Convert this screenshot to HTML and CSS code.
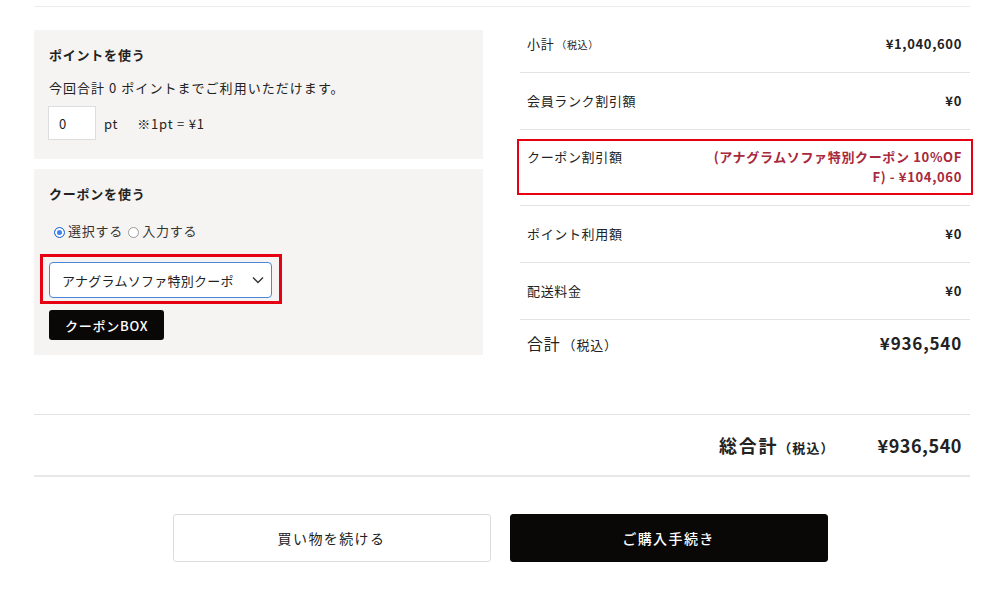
FILE: index.html
```html
<!DOCTYPE html>
<html lang="ja">
<head>
    <meta charset="UTF-8">
    <meta name="viewport" content="width=device-width, initial-scale=1.0">
    <title>カート</title>
    <link rel="stylesheet" href="styles.css">
</head>
<body>
    <div class="cart">
        <div class="summary">
            <div class="options">
                <div class="panel panel-point">
                    <h3>ポイントを使う</h3>
                    <p class="note">今回合計 0 ポイントまでご利用いただけます。</p>
                    <div class="point-row">
                        <input type="text" class="point-input" value="0">
                        <span class="unit">pt</span>
                        <span class="rate">※1pt = ¥1</span>
                    </div>
                </div>
                <div class="panel panel-coupon">
                    <h3>クーポンを使う</h3>
                    <div class="radios">
                        <label><input type="radio" name="coupon_mode" checked>選択する</label>
                        <label><input type="radio" name="coupon_mode">入力する</label>
                    </div>
                    <div class="mark mark-select">
                        <div class="select-wrap">
                            <select class="coupon-select">
                                <option>アナグラムソファ特別クーポン 10%OFF</option>
                            </select>
                            <svg class="chevron" width="12" height="8" viewBox="0 0 12 8"><path d="M1 1.5l5 5 5-5" fill="none" stroke="#333" stroke-width="1.4"/></svg>
                        </div>
                    </div>
                    <button class="btn-box">クーポンBOX</button>
                </div>
            </div>

            <div class="totals">
                <div class="row">
                    <span class="label">小計<small>（税込）</small></span>
                    <span class="value">¥1,040,600</span>
                </div>
                <div class="row">
                    <span class="label">会員ランク割引額</span>
                    <span class="value">¥0</span>
                </div>
                <div class="row row-coupon">
                    <div class="mark mark-row">
                        <span class="label">クーポン割引額</span>
                        <span class="value discount">(アナグラムソファ特別クーポン 10%OFF) - ¥104,060</span>
                    </div>
                </div>
                <div class="row">
                    <span class="label">ポイント利用額</span>
                    <span class="value">¥0</span>
                </div>
                <div class="row">
                    <span class="label">配送料金</span>
                    <span class="value">¥0</span>
                </div>
                <div class="row row-total">
                    <span class="label">合計<small>（税込）</small></span>
                    <span class="value">¥936,540</span>
                </div>
            </div>
        </div>

        <div class="grand">
            <span class="grand-label">総合計<small>（税込）</small></span>
            <span class="grand-value">¥936,540</span>
        </div>

        <div class="actions">
            <button class="btn btn-continue">買い物を続ける</button>
            <button class="btn btn-checkout">ご購入手続き</button>
        </div>
    </div>
</body>
</html>
```

FILE: styles.css
```css
body {
    margin: 0;
    background-color: #ffffff;
    font-family: 'Noto Sans CJK JP', 'Noto Sans', sans-serif;
    font-size: 13px;
    color: #222222;
}
.cart {
    width: 936px;
    margin-left: 34px;
    padding-top: 6px;
}
.summary {
    display: grid;
    grid-template-columns: 449px 450px;
    column-gap: 37px;
    align-items: start;
    border-top: 1px solid #ececec;
    padding-bottom: 46px;
}

/* left side */
.options {
    padding-top: 23px;
    display: flex;
    flex-direction: column;
    gap: 10px;
}
.panel {
    background-color: #f5f4f2;
    padding: 15px 15px 19px;
}
.panel-coupon {
    padding-bottom: 15px;
}
.panel h3 {
    margin: 0;
    font-size: 13px;
    line-height: 20px;
    font-weight: bold;
    letter-spacing: 0.06em;
}
.note {
    margin: 13px 0 0;
    line-height: 20px;
    letter-spacing: 0.08em;
}
.point-row {
    display: flex;
    align-items: center;
    margin-top: 8px;
    letter-spacing: 0.06em;
}
.point-input {
    width: 48px;
    height: 34px;
    box-sizing: border-box;
    border: 1px solid #dddddd;
    padding: 0 10px;
    font-family: inherit;
    font-size: 13px;
    color: #222222;
    margin: 0 0 0 -1px;
}
.unit {
    margin-left: 8px;
}
.rate {
    margin-left: 19px;
}
.radios {
    display: flex;
    gap: 5px;
    margin-top: 17px;
    margin-left: 5px;
    line-height: 20px;
    letter-spacing: 0.06em;
    color: #333333;
}
.radios label {
    display: flex;
    align-items: center;
}
.radios input {
    appearance: none;
    width: 11px;
    height: 11px;
    margin: 3px 3px 0 0;
    border: 1px solid #9a9a9a;
    border-radius: 50%;
    background-color: #ffffff;
}
.radios input:checked {
    border-color: #2f6fd6;
    background-color: #3c84e8;
    box-shadow: inset 0 0 0 2px #ffffff;
}
.mark {
    border: 3px solid #e60012;
}
.mark-select {
    margin: 13px 0 0 -9px;
    width: 242px;
    box-sizing: border-box;
    padding: 5px 7px 3px 6px;
}
.select-wrap {
    position: relative;
}
.coupon-select {
    appearance: none;
    display: block;
    width: 223px;
    height: 36px;
    border: 1px solid #4a86d8;
    border-radius: 4px;
    background-color: #ffffff;
    padding: 0 38px 0 12px;
    font-family: inherit;
    font-size: 13px;
    letter-spacing: 0.02em;
    color: #222222;
}
.chevron {
    position: absolute;
    right: 8px;
    top: 14px;
}
.btn-box {
    margin-top: 6px;
    height: 30px;
    padding: 0 16px;
    background-color: #0a0707;
    color: #ffffff;
    border: none;
    border-radius: 3px;
    font-family: inherit;
    font-size: 13px;
    font-weight: 500;
    letter-spacing: 0.06em;
}

/* right side */
.totals {
    padding-top: 9px;
}
.row {
    display: flex;
    justify-content: space-between;
    align-items: flex-start;
    padding: 18px 8px 18px 7px;
    line-height: 20px;
    border-bottom: 1px solid #e3e3e3;
    letter-spacing: 0.05em;
}
.row small {
    font-size: 10px;
    line-height: 1;
    margin-left: 2px;
}
.value {
    font-weight: bold;
}
.row-coupon {
    padding: 9px 0 10px;
}
.mark-row {
    flex: 1;
    display: flex;
    justify-content: space-between;
    align-items: flex-start;
    margin: 0 -3px;
    border-width: 2px;
    padding: 6px 9px 6px 8px;
}
.discount {
    color: #a8283c;
    width: 252px;
    text-align: right;
    word-break: break-all;
}
.row-total {
    border-bottom: none;
    padding-top: 12px;
    padding-bottom: 14px;
    line-height: 22px;
    font-size: 16px;
}
.row-total small {
    font-size: 13px;
}
.row-total .value {
    font-size: 17px;
}

/* grand total */
.grand {
    display: flex;
    justify-content: flex-end;
    align-items: center;
    gap: 43px;
    height: 63px;
    box-sizing: border-box;
    padding: 0 8px;
    border-top: 1px solid #e3e3e3;
    border-bottom: 2px solid #e8e8e8;
    font-weight: bold;
}
.grand-label {
    font-size: 18px;
    line-height: 26px;
    letter-spacing: 0.1em;
}
.grand-label small {
    font-size: 13px;
    line-height: 1;
    letter-spacing: 0.08em;
}
.grand-value {
    font-size: 18px;
    line-height: 26px;
    letter-spacing: 0.03em;
}

/* buttons */
.actions {
    display: flex;
    justify-content: center;
    gap: 19px;
    margin-top: 37px;
    padding-right: 4px;
}
.btn {
    width: 318px;
    height: 48px;
    border-radius: 3px;
    font-family: inherit;
    font-size: 14px;
    letter-spacing: 0.1em;
}
.btn-continue {
    background-color: #ffffff;
    border: 1px solid #dcdcdc;
    color: #222222;
}
.btn-checkout {
    background-color: #0a0707;
    border: 1px solid #0a0707;
    color: #ffffff;
    font-weight: 500;
}
```
